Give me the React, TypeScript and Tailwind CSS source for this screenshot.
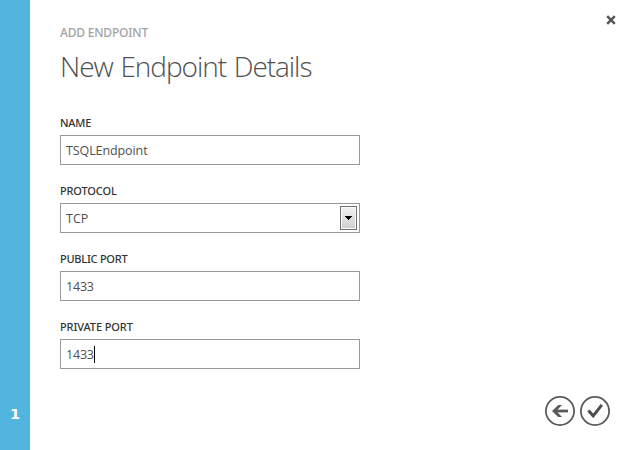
type FieldProps = {
  label: string;
  labelClass: string;
  value: string;
  valueClass: string;
  select?: boolean;
  caret?: boolean;
};

function Field({ label, labelClass, value, valueClass, select, caret }: FieldProps) {
  return (
    <div className="flex h-[68px] flex-col">
      <label className={`h-[20px] whitespace-nowrap font-['Noto_Sans',sans-serif] text-[11px] leading-[15px] font-medium text-[#333333] ${labelClass}`}>
        {label}
      </label>
      <div className="flex h-[30px] w-[300px] items-center border border-[#999999] bg-white pr-[2px] pl-[5px]">
        <span className={`whitespace-nowrap pt-[2px] text-[12.5px] leading-[20px] text-[#505050] ${valueClass}`}>{value}</span>
        {caret && <span className="h-[17px] w-px bg-black" />}
        {select && (
          <span className="ml-auto flex h-[24px] w-[17px] items-center justify-center border border-[#707070] bg-linear-to-b from-[#f2f2f2] to-[#cfcfcf] shadow-[inset_0_0_0_1px_#fafafa]">
            <svg width="7" height="4" viewBox="0 0 7 4" shapeRendering="crispEdges">
              <path d="M0 0H7V1H6V2H5V3H4V4H3V3H2V2H1V1H0Z" fill="#000" />
            </svg>
          </span>
        )}
      </div>
    </div>
  );
}

export default function App() {
  return (
    <div className="flex h-[450px] w-[630px] overflow-hidden bg-white font-['Open_Sans','Noto_Sans',sans-serif]">
      <aside className="flex w-[30px] shrink-0 flex-col items-center justify-end bg-[#52b5e0] pb-[26px]">
        <span className="font-['DejaVu_Sans',sans-serif] text-[14.5px] leading-[20px] font-bold text-white">1</span>
      </aside>
      <main className="flex flex-1 flex-col pt-[25px] pl-[30px]">
        <p className="h-[16px] whitespace-nowrap font-['Noto_Sans',sans-serif] text-[12px] leading-[16px] font-medium tracking-[-0.2px] text-[#a3a3a3]">
          ADD ENDPOINT
        </p>
        <h1 className="mt-[5px] h-[40px] whitespace-nowrap text-[28px] leading-[40px] font-light tracking-[-1.05px] [word-spacing:1.5px] text-[#505050]">
          New Endpoint Details
        </h1>
        <form className="mt-[29px] flex flex-col">
          <Field label="NAME" labelClass="tracking-[-0.2px]" value="TSQLEndpoint" valueClass="tracking-[-0.1px]" />
          <Field label="PROTOCOL" labelClass="tracking-[-0.15px]" value="TCP" valueClass="tracking-[0px]" select />
          <Field label="PUBLIC PORT" labelClass="tracking-[-0.25px]" value="1433" valueClass="tracking-[-0.2px]" />
          <Field label="PRIVATE PORT" labelClass="tracking-[-0.1px]" value="1433" valueClass="tracking-[-0.2px]" caret />
        </form>
      </main>
      <div className="flex w-[90px] shrink-0 flex-col items-end justify-between pt-[15px] pr-[14px] pb-[23px]">
        <button aria-label="Close" className="h-[10px] w-[10px]">
          <svg width="10" height="10" viewBox="0 0 10 10">
            <path d="M1.2 1.2L8.8 8.8M8.8 1.2L1.2 8.8" stroke="#555" strokeWidth="2.5" fill="none" />
          </svg>
        </button>
        <div className="mr-[5px] flex gap-[3px]">
          <button aria-label="Back">
            <svg width="32" height="32" viewBox="0 0 32 32" fill="none" stroke="#5a5a5a" className="block">
              <circle cx="16" cy="16" r="14.1" strokeWidth="1.8" />
              <path d="M10 16H24" strokeWidth="2.8" />
              <path d="M18 10H14.2L8 16L14.2 22H18L12.3 16Z" fill="#5a5a5a" stroke="none" />
            </svg>
          </button>
          <button aria-label="Complete">
            <svg width="32" height="32" viewBox="0 0 32 32" fill="none" stroke="#5a5a5a" className="block">
              <circle cx="16" cy="16" r="14.1" strokeWidth="1.8" />
              <path d="M9.4 15.4L14.2 20.8L22.8 9.8" stroke="#505050" strokeWidth="3" />
            </svg>
          </button>
        </div>
      </div>
    </div>
  );
}
